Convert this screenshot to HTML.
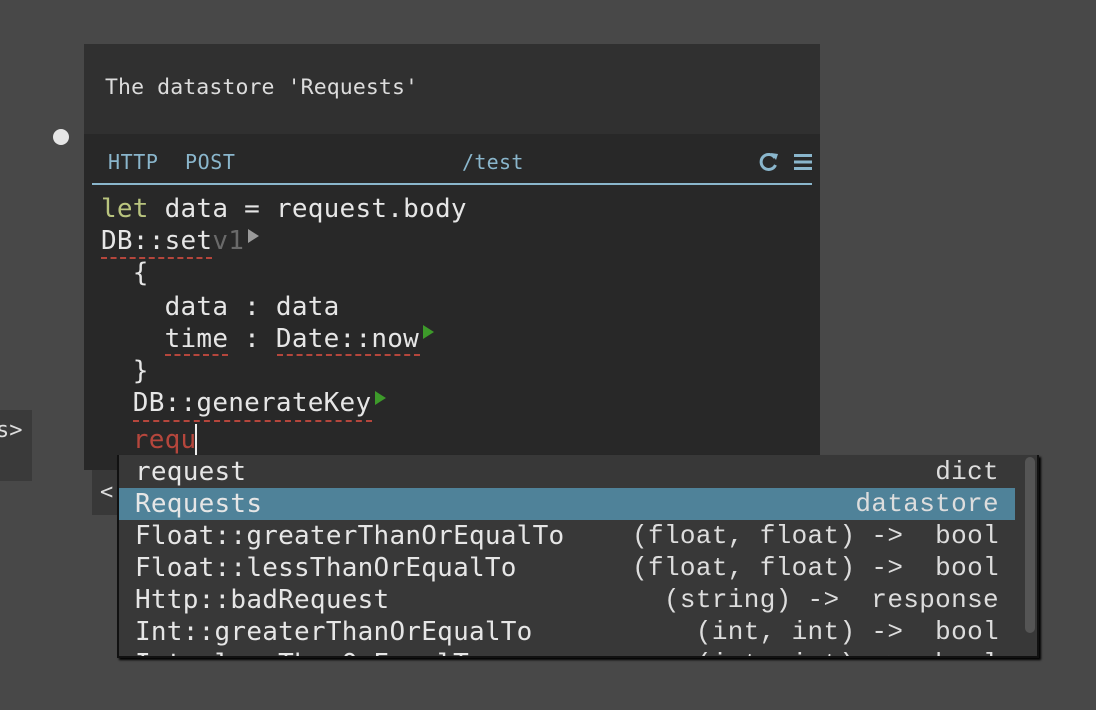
<!DOCTYPE html>
<html><head><style>
body{margin:0;width:1096px;height:710px;background:#484848;position:relative;overflow:hidden;font-family:"DejaVu Sans Mono","Liberation Mono",monospace;}
.a{position:absolute;white-space:pre;}
.code{font-size:26px;line-height:32px;color:#e6e6e6;letter-spacing:0.25px;}
.ul{position:absolute;height:0;border-top:2px dashed #b5463c;}
.tri{position:absolute;width:0;height:0;border-top:7px solid transparent;border-bottom:7px solid transparent;border-left:11px solid #3d9a2a;}
.row{position:absolute;left:0;width:896px;height:32px;line-height:32px;font-size:26px;}
.row .l{position:absolute;left:16px;font-family:"DejaVu Sans Mono",monospace;color:#e6e6e6;letter-spacing:0.25px;}
.row .r{position:absolute;right:16px;font-family:"Liberation Mono",monospace;color:#ddd;font-size:26px;letter-spacing:0.35px;}
</style></head><body>
<div class="a" style="left:0;top:410px;width:32px;height:71px;background:#3a3a3a;"></div>
<div class="a" style="left:-4px;top:418px;font-size:22px;color:#ddd;">s&gt;</div>
<div class="a" style="left:53px;top:129px;width:16px;height:16px;border-radius:50%;background:#e6e6e6;"></div>
<div class="a" style="left:84px;top:44px;width:736px;height:90px;background:#303030;"></div>
<div class="a" style="left:84px;top:134px;width:736px;height:336px;background:#282828;"></div>
<div class="a" style="left:92px;top:470px;width:30px;height:45px;background:#383838;"></div>
<div class="a" style="left:100px;top:480px;font-size:22px;color:#ddd;">&lt;</div>
<div class="a" style="left:105px;top:75px;font-size:21.5px;color:#dcdcdc;letter-spacing:0.1px;">The datastore 'Requests'</div>
<div class="a" style="left:108px;top:150px;font-size:20px;color:#8ab6cc;letter-spacing:0.6px;">HTTP</div>
<div class="a" style="left:185px;top:150px;font-size:20px;color:#8ab6cc;letter-spacing:0.6px;">POST</div>
<div class="a" style="left:462px;top:150px;font-size:20px;color:#8ab6cc;letter-spacing:0.3px;">/test</div>
<svg class="a" style="left:758px;top:150px" width="56" height="24" viewBox="0 0 56 24">
<path d="M17 8 A7.5 7.5 0 1 0 17.5 15" fill="none" stroke="#8ab6cc" stroke-width="3"/>
<path d="M13 3 L20 4 L18 10 Z" fill="#8ab6cc"/>
<rect x="36" y="4" width="18" height="3" fill="#8ab6cc"/><rect x="36" y="10.5" width="18" height="3" fill="#8ab6cc"/><rect x="36" y="17" width="18" height="3" fill="#8ab6cc"/>
</svg>
<div class="a" style="left:92px;top:183px;width:720px;height:2px;background:#8ab6cc;"></div>
<div class="a code" style="left:101px;top:193px;"><span style="color:#b9c47e">let</span> data = request.body</div>
<div class="a code" style="left:101px;top:225px;">DB::set<span style="color:#6a6a6a">v1</span></div>
<div class="tri" style="left:248px;top:229px;border-left-color:#9a9a9a;"></div>
<div class="ul" style="left:101px;top:257px;width:111px;"></div>
<div class="a code" style="left:101px;top:257px;">  {</div>
<div class="a code" style="left:101px;top:291px;">    data : data</div>
<div class="a code" style="left:101px;top:323px;">    time : Date::now</div>
<div class="tri" style="left:423px;top:325px;"></div>
<div class="ul" style="left:165px;top:354px;width:63px;"></div>
<div class="ul" style="left:277px;top:354px;width:143px;"></div>
<div class="a code" style="left:101px;top:355px;">  }</div>
<div class="a code" style="left:101px;top:387px;">  DB::generateKey</div>
<div class="tri" style="left:375px;top:391px;"></div>
<div class="ul" style="left:133px;top:420px;width:239px;"></div>
<div class="a code" style="left:101px;top:424px;color:#b5463c;">  requ</div>
<div class="a" style="left:195px;top:424px;width:2px;height:32px;background:#eee;"></div>
<div class="a" style="left:117px;top:455px;width:918px;height:201px;background:#383838;border:2px solid #111;border-top:none;box-shadow:2px 2px 2px #000;overflow:hidden;">
<div class="row" style="top:1px;"><span class="l">request</span><span class="r">dict</span></div>
<div class="row" style="top:33px;background:#4f8299;"><span class="l">Requests</span><span class="r">datastore</span></div>
<div class="row" style="top:65px;"><span class="l">Float::greaterThanOrEqualTo</span><span class="r">(float, float) -&gt;  bool</span></div>
<div class="row" style="top:97px;"><span class="l">Float::lessThanOrEqualTo</span><span class="r">(float, float) -&gt;  bool</span></div>
<div class="row" style="top:129px;"><span class="l">Http::badRequest</span><span class="r">(string) -&gt;  response</span></div>
<div class="row" style="top:161px;"><span class="l">Int::greaterThanOrEqualTo</span><span class="r">(int, int) -&gt;  bool</span></div>
<div class="row" style="top:193px;"><span class="l">Int::lessThanOrEqualTo</span><span class="r">(int, int) -&gt;  bool</span></div>
<div class="a" style="left:906px;top:2px;width:10px;height:176px;border-radius:5px;background:#555;"></div>
</div>
</body></html>
